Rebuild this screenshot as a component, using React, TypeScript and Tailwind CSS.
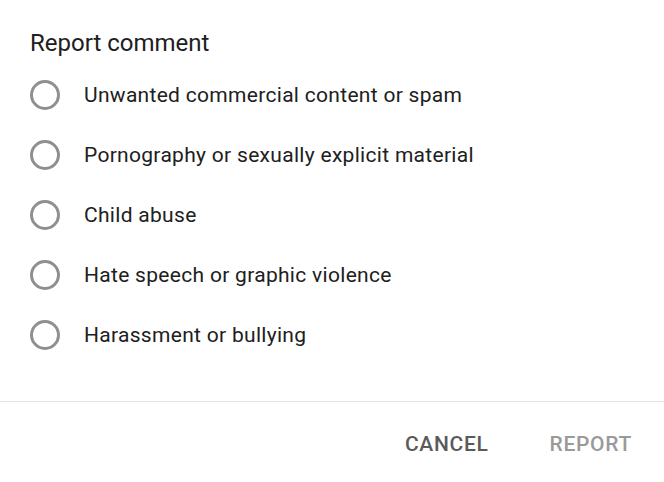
const options = [
  "Unwanted commercial content or spam",
  "Pornography or sexually explicit material",
  "Child abuse",
  "Hate speech or graphic violence",
  "Harassment or bullying",
];

export default function App() {
  return (
    <div className="w-[664px] h-[482px] bg-white flex flex-col font-['Roboto',sans-serif] text-[#202020]">
      <div className="px-[30px] pt-[29px] flex-1">
        <h1 className="text-[24px] leading-[28px]">Report comment</h1>
        <div className="mt-[8px] flex flex-col">
          {options.map((opt) => (
            <label key={opt} className="h-[60px] flex items-center gap-[24px]">
              <span className="w-[30px] h-[30px] rounded-full border-[3px] border-[#8f8f8f] shrink-0" />
              <span className="text-[21px] tracking-[0.3px] pt-[2px]">{opt}</span>
            </label>
          ))}
        </div>
      </div>
      <div className="border-t border-[#e3e3e3] h-[81px] flex items-center justify-end pr-[32px] pt-[6px] text-[21px] font-medium tracking-[0.7px]">
        <div className="flex items-center gap-[61px]">
          <button className="text-[#5a5a5a]">CANCEL</button>
          <button className="text-[#9a9a9a]">REPORT</button>
        </div>
      </div>
    </div>
  );
}
